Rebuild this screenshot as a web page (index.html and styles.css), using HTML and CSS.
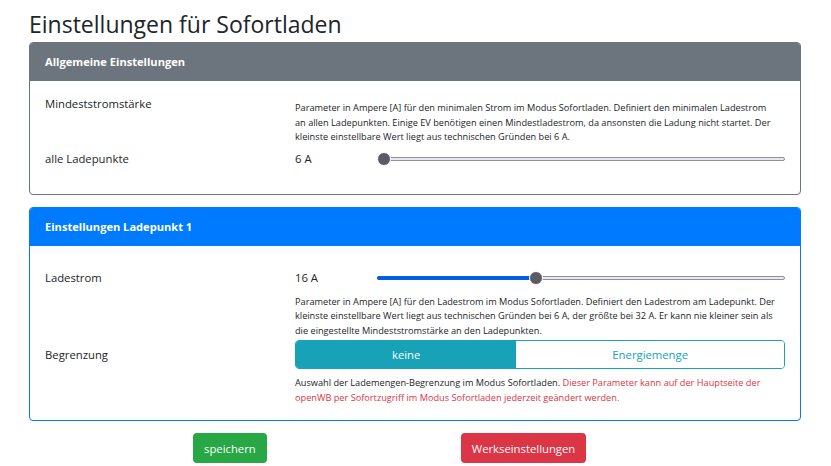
FILE: index.html
```html
<!DOCTYPE html>
<html lang="de">
<head>
    <meta charset="UTF-8">
    <meta name="viewport" content="width=device-width, initial-scale=1.0">
    <title>Einstellungen für Sofortladen</title>
    <link rel="stylesheet" href="styles.css">
</head>
<body>
    <div class="container">
        <h1>Einstellungen für Sofortladen</h1>

        <div class="card card-secondary">
            <div class="card-header">Allgemeine Einstellungen</div>
            <div class="card-body body-first">
                <div class="form-row">
                    <div class="label">Mindeststromstärke</div>
                    <div class="help help-top">
                        Parameter in Ampere [A] für den minimalen Strom im Modus Sofortladen. Definiert den minimalen Ladestrom
                        an allen Ladepunkten. Einige EV benötigen einen Mindestladestrom, da ansonsten die Ladung nicht startet. Der
                        kleinste einstellbare Wert liegt aus technischen Gründen bei 6 A.
                    </div>
                </div>
                <div class="form-row">
                    <div class="label">alle Ladepunkte</div>
                    <div class="range-row">
                        <span class="range-value">6 A</span>
                        <div class="slider">
                            <div class="slider-track"></div>
                            <div class="slider-thumb" style="--pos: 0"></div>
                        </div>
                    </div>
                </div>
            </div>
        </div>

        <div class="card card-primary">
            <div class="card-header">Einstellungen Ladepunkt 1</div>
            <div class="card-body body-second">
                <div class="form-row">
                    <div class="label">Ladestrom</div>
                    <div>
                        <div class="range-row">
                            <span class="range-value">16 A</span>
                            <div class="slider">
                                <div class="slider-track"></div>
                                <div class="slider-fill" style="--pos: 0.385"></div>
                                <div class="slider-thumb" style="--pos: 0.385"></div>
                            </div>
                        </div>
                        <div class="help">
                            Parameter in Ampere [A] für den Ladestrom im Modus Sofortladen. Definiert den Ladestrom am Ladepunkt. Der
                            kleinste einstellbare Wert liegt aus technischen Gründen bei 6 A, der größte bei 32 A. Er kann nie kleiner sein als
                            die eingestellte Mindeststromstärke an den Ladepunkten.
                        </div>
                    </div>
                </div>
                <div class="form-row">
                    <div class="label label-mid">Begrenzung</div>
                    <div>
                        <div class="btn-group">
                            <button class="btn-toggle active">keine</button>
                            <button class="btn-toggle">Energiemenge</button>
                        </div>
                        <div class="help">
                            Auswahl der Lademengen-Begrenzung im Modus Sofortladen. <span class="text-danger">Dieser Parameter kann auf der Hauptseite der
                            openWB per Sofortzugriff im Modus Sofortladen jederzeit geändert werden.</span>
                        </div>
                    </div>
                </div>
            </div>
        </div>

        <div class="actions">
            <button class="btn btn-success">speichern</button>
            <button class="btn btn-danger">Werkseinstellungen</button>
        </div>
    </div>
</body>
</html>
```

FILE: styles.css
```css
body {
    margin: 0;
    font-family: "Open Sans", "Noto Sans", sans-serif;
    font-size: 11.3px;
    color: #212529;
    background: #fff;
}
.container {
    padding: 0 29px 0 29px;
    width: 772px;
}
h1 {
    font-size: 23px;
    font-weight: 400;
    margin: 7px 0 1px 0;
    line-height: 34px;
}
.card {
    border: 1px solid #6c757d;
    border-radius: 4px;
    margin-bottom: 12px;
    overflow: hidden;
}
.card-header {
    height: 38px;
    line-height: 38px;
    padding: 0 15px;
    color: #fff;
    font-weight: 700;
    font-size: 11.1px;
}
.card-secondary .card-header {
    background: #6c757d;
}
.card-primary {
    border-color: #007bff;
}
.card-primary .card-header {
    background: #007bff;
}
.card-body {
    padding: 0 15px;
}
.body-first {
    padding-top: 13px;
    padding-bottom: 25px;
}
.body-second {
    padding-top: 22px;
    padding-bottom: 13px;
}
.form-row {
    display: grid;
    grid-template-columns: 250px 1fr;
}
.label {
    line-height: 20px;
}
.label-mid {
    margin-top: 5px;
}
.help {
    font-size: 9.2px;
    line-height: 14.5px;
    margin: 7px 0 2px 0;
    max-width: 480px;
}
.help-top {
    margin-bottom: 4px;
}
.text-danger {
    color: #dc3545;
}
.range-row {
    display: flex;
    align-items: center;
    height: 20px;
}
.range-value {
    width: 82px;
}
.slider {
    position: relative;
    flex: 1;
    height: 14px;
}
.slider-track {
    position: absolute;
    left: 0;
    right: 0;
    top: 5px;
    height: 2px;
    border: 1px solid #8f8f9d;
    border-radius: 3px;
    background: #e9e9ed;
}
.slider-fill {
    position: absolute;
    left: 0;
    top: 5px;
    height: 4px;
    border-radius: 3px;
    background: #0060df;
    width: calc(6px + (100% - 12px) * var(--pos));
}
.slider-thumb {
    position: absolute;
    top: 0;
    left: calc((100% - 14px) * var(--pos));
    width: 12px;
    height: 12px;
    border: 1px solid #fff;
    border-radius: 50%;
    background: #5b5b66;
}
.btn-group {
    display: flex;
    border: 1px solid #17a2b8;
    border-radius: 4px;
    overflow: hidden;
}
.btn-toggle {
    flex: 1 1 auto;
    height: 27px;
    border: none;
    background: #fff;
    color: #17a2b8;
    font-family: inherit;
    font-size: 11.3px;
    padding: 0 12px;
}
.btn-toggle.active {
    background: #17a2b8;
    color: #fff;
}
.actions {
    display: flex;
    margin-top: 1px;
    padding-left: 164px;
    gap: 194px;
}
.btn {
    height: 30px;
    border: none;
    border-radius: 4px;
    color: #fff;
    font-family: inherit;
    font-size: 11.3px;
    padding: 0 11px;
}
.btn-success {
    background: #28a745;
}
.btn-danger {
    background: #dc3545;
}
```
